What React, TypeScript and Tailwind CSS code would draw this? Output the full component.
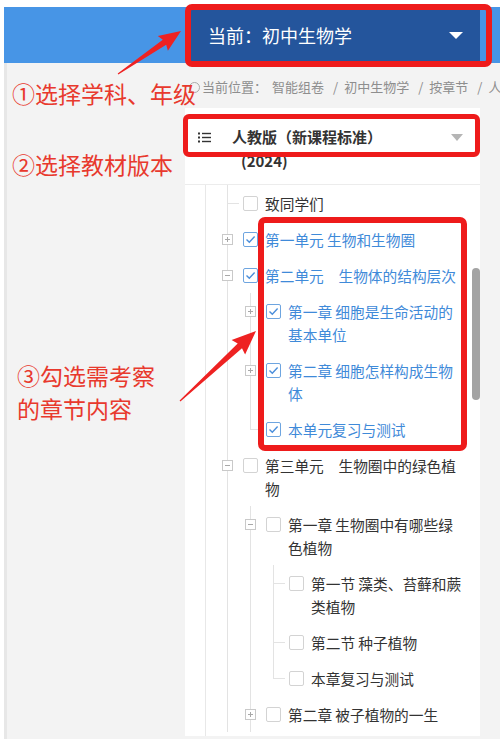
import React from "react";

type TNode = {
  lines: string[];
  checked?: boolean;
  exp?: "open" | "closed";
  children?: TNode[];
  cont?: boolean;
};

const tree: TNode[] = [
  { lines: ["致同学们"] },
  { lines: ["第一单元 生物和生物圈"], checked: true, exp: "closed" },
  {
    lines: ["第二单元　生物体的结构层次"],
    checked: true,
    exp: "open",
    children: [
      { lines: ["第一章 细胞是生命活动的", "基本单位"], checked: true, exp: "closed" },
      { lines: ["第二章 细胞怎样构成生物", "体"], checked: true, exp: "closed" },
      { lines: ["本单元复习与测试"], checked: true },
    ],
  },
  {
    lines: ["第三单元　生物圈中的绿色植", "物"],
    exp: "open",
    cont: true,
    children: [
      {
        lines: ["第一章 生物圈中有哪些绿", "色植物"],
        exp: "open",
        children: [
          { lines: ["第一节 藻类、苔藓和蕨", "类植物"] },
          { lines: ["第二节 种子植物"] },
          { lines: ["本章复习与测试"] },
        ],
      },
      { lines: ["第二章 被子植物的一生"], exp: "closed" },
    ],
  },
];

function Expander({ open }: { open: boolean }) {
  return (
    <div className="absolute left-[6px] top-[6px] w-[11px] h-[11px] border border-[#c9c9c9] bg-white">
      <svg width="9" height="9" viewBox="0 0 9 9" className="block">
        <line x1="2" y1="4.5" x2="7" y2="4.5" stroke="#a8a8a8" strokeWidth="1" />
        {!open && <line x1="4.5" y1="2" x2="4.5" y2="7" stroke="#a8a8a8" strokeWidth="1" />}
      </svg>
    </div>
  );
}

function Checkbox({ checked }: { checked?: boolean }) {
  return (
    <div
      className={
        checked
          ? "ml-[5px] mt-[4px] w-[15px] h-[15px] shrink-0 rounded-[2px] border border-[#6ea5e0] bg-white"
          : "ml-[5px] mt-[4px] w-[15px] h-[15px] shrink-0 rounded-[2px] border border-[#d3d3d3] bg-white"
      }
    >
      {checked && (
        <svg width="13" height="13" viewBox="0 0 13 13" className="block">
          <path d="M2.5 6.5 L5.3 9.3 L10.6 3.6" fill="none" stroke="#4a8edb" strokeWidth="1.4" />
        </svg>
      )}
    </div>
  );
}

function Row({ n }: { n: TNode }) {
  return (
    <div className="flex items-start py-[6.5px]">
      <div className="relative w-[22px] h-[23px] shrink-0">
        {n.exp ? (
          <Expander open={n.exp === "open"} />
        ) : (
          <div className="absolute left-[11px] top-[11px] w-[12px] h-px bg-[#e3e3e3]" />
        )}
      </div>
      <Checkbox checked={n.checked} />
      <div
        className={
          n.checked
            ? "ml-[7px] leading-[23px] text-[14.7px] text-[#3f8ad9] whitespace-nowrap"
            : "ml-[7px] leading-[23px] text-[14.7px] text-[#333333] whitespace-nowrap"
        }
      >
        {n.lines.map((l, i) => (
          <div key={i}>{l}</div>
        ))}
      </div>
    </div>
  );
}

function List({ nodes, cont }: { nodes: TNode[]; cont?: boolean }) {
  return (
    <div className="relative">
      <div
        className={
          cont
            ? "absolute left-[11px] top-0 bottom-0 w-px bg-[#e3e3e3]"
            : "absolute left-[11px] top-0 bottom-[18px] w-px bg-[#e3e3e3]"
        }
      />
      {nodes.map((n, i) => (
        <div key={i} className="relative">
          <Row n={n} />
          {n.children && (
            <div className="ml-[23px]">
              <List nodes={n.children} cont={n.cont} />
            </div>
          )}
        </div>
      ))}
    </div>
  );
}

function arrow(x1: number, y1: number, x2: number, y2: number, hl: number, hw: number, sw: number) {
  const dx = x2 - x1;
  const dy = y2 - y1;
  const len = Math.hypot(dx, dy);
  const ux = dx / len;
  const uy = dy / len;
  const nx = -uy;
  const ny = ux;
  const bx = x2 - ux * hl;
  const by = y2 - uy * hl;
  const pts = [
    [x1 + nx * 0.6, y1 + ny * 0.6],
    [bx + nx * sw, by + ny * sw],
    [bx + nx * hw - ux * 2, by + ny * hw - uy * 2],
    [x2, y2],
    [bx - nx * hw - ux * 2, by - ny * hw - uy * 2],
    [bx - nx * sw, by - ny * sw],
    [x1 - nx * 0.6, y1 - ny * 0.6],
  ];
  return pts.map((p) => p.map((v) => v.toFixed(1)).join(",")).join(" ");
}

export default function App() {
  return (
    <div className="relative w-[500px] h-[739px] overflow-hidden bg-white font-['Noto_Sans_CJK_SC','Noto_Sans',sans-serif]">
      <div className="pt-[7px] pl-[4px] h-full flex flex-col">
        {/* top bar */}
        <div className="h-[56px] bg-[#4795e6] flex shrink-0">
          <div className="ml-[186px] w-[290px] bg-[#24559c] flex items-center pl-[18px] pr-[17px]">
            <span className="text-white text-[18px] leading-none">当前：初中生物学</span>
            <svg width="14" height="7" viewBox="0 0 14 7" className="ml-auto">
              <path d="M0 0 L14 0 L7 7 Z" fill="#ffffff" />
            </svg>
          </div>
        </div>

        <div className="flex-1 bg-[#f3f3f3] border-l-[3px] border-[#e7e7e7] flex flex-col">
          {/* breadcrumb */}
          <div className="h-[45px] pt-[3px] pl-[182px] flex items-center whitespace-nowrap overflow-hidden text-[13px] text-[#8e8e8e] shrink-0">
            <div className="w-[11px] h-[11px] rounded-full border border-[#aaaaaa] shrink-0" />
            <span className="ml-[2px]">当前位置：</span>
            <span className="ml-[5px]">智能组卷</span>
            <span className="ml-[9px] mr-[6px]">/</span>
            <span>初中生物学</span>
            <span className="ml-[9px] mr-[6px]">/</span>
            <span>按章节</span>
            <span className="ml-[9px] mr-[6px]">/</span>
            <span>人</span>
          </div>

          {/* panel */}
          <div className="ml-[178px] w-[295px] flex-1 mb-[3px] bg-white flex flex-col">
            <div className="flex items-start pl-[13px] pr-[17px] pt-[17px] pb-[11px] border-b border-[#ececec] shrink-0">
              <svg width="13" height="11" viewBox="0 0 13 11" className="mt-[7px] shrink-0">
                <rect x="0" y="0.5" width="2" height="2" fill="#333" />
                <rect x="0" y="4.5" width="2" height="2" fill="#333" />
                <rect x="0" y="8.5" width="2" height="2" fill="#333" />
                <rect x="4" y="0.8" width="9" height="1.4" fill="#333" />
                <rect x="4" y="4.8" width="9" height="1.4" fill="#333" />
                <rect x="4" y="8.8" width="9" height="1.4" fill="#333" />
              </svg>
              <div className="ml-[21px] text-[15px] font-bold text-[#333333] leading-[24px] whitespace-nowrap">
                <div>人教版（新课程标准）</div>
                <div className="ml-[9px]">(2024)</div>
              </div>
              <svg width="12" height="7" viewBox="0 0 12 7" className="ml-auto mt-[9px] shrink-0">
                <path d="M0 0 L12 0 L6 7 Z" fill="#b5b5b5" />
              </svg>
            </div>

            <div className="flex-1 flex overflow-hidden">
              <div className="flex-1 pl-[20px] overflow-hidden">
                <div className="h-full border-l border-[#e8e8e8] pl-[10px]">
                  <List nodes={tree} cont />
                </div>
              </div>
              <div className="w-[8px] shrink-0">
                <div className="mt-[83px] h-[132px] w-[8px] rounded-full bg-[#a3a3a3]" />
              </div>
            </div>
          </div>
        </div>
      </div>

      {/* annotations */}
      <div className="absolute left-[185px] top-[4px] w-[307px] h-[63px] border-[6px] border-[#ee1b1b] rounded-[7px]" />
      <div className="absolute left-[183px] top-[114px] w-[297px] h-[43px] border-[5px] border-[#ee1b1b] rounded-[6px]" />
      <div className="absolute left-[258px] top-[217px] w-[209px] h-[234px] border-[6px] border-[#ee1b1b] rounded-[7px]" />

      <div className="absolute left-[12px] top-[77px] text-[23px] leading-[33px] text-[#e8392d] whitespace-nowrap">
        ①选择学科、年级
      </div>
      <div className="absolute left-[12px] top-[148px] text-[23px] leading-[33px] text-[#e8392d] whitespace-nowrap">
        ②选择教材版本
      </div>
      <div className="absolute left-[17px] top-[359px] text-[23px] leading-[33px] text-[#e8392d] whitespace-nowrap">
        <div>③勾选需考察</div>
        <div>的章节内容</div>
      </div>

      <svg className="absolute inset-0 pointer-events-none" width="500" height="739" viewBox="0 0 500 739">
        <polygon points={arrow(118, 74, 181, 31, 20, 9, 3)} fill="#ee2222" />
        <polygon points={arrow(180, 401, 256, 331, 22, 10, 3.2)} fill="#ee2222" />
      </svg>
    </div>
  );
}
